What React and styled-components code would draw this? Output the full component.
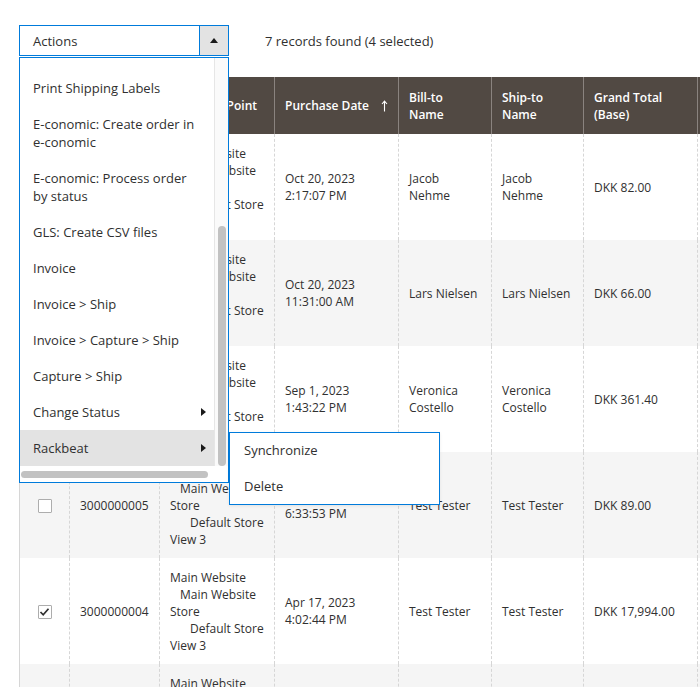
import React from 'react';
import styled, { createGlobalStyle } from 'styled-components';

const GlobalStyle = createGlobalStyle`
  html, body { margin: 0; padding: 0; background: #fff; }
  body {
    font-family: "Open Sans", "Liberation Sans", Arial, sans-serif;
    color: #303030;
    font-size: 13px;
  }
  * { box-sizing: border-box; }
`;

const Page = styled.div`
  width: 700px;
  height: 687px;
  overflow: hidden;
  padding: 25px 0 0 19px;
`;

const Toolbar = styled.div`
  display: flex;
  align-items: center;
  gap: 36px;
  height: 31px;
`;

const ActionsWrap = styled.div`
  position: relative;
  width: 210px;
  z-index: 10;
`;

const Select = styled.div`
  display: flex;
  height: 31px;
  border: 1px solid #007bdb;
  background: #fff;
`;

const SelectLabel = styled.div`
  flex: 1;
  display: flex;
  align-items: center;
  padding-left: 13px;
  font-size: 13px;
  color: #303030;
`;

const SelectToggle = styled.div`
  width: 29px;
  display: flex;
  align-items: center;
  justify-content: center;
  background: #e3e3e3;
  border-left: 1px solid #007bdb;
`;

const TriUp = styled.span`
  width: 0;
  height: 0;
  border-left: 4px solid transparent;
  border-right: 4px solid transparent;
  border-bottom: 5px solid #1a1a1a;
`;

const TriRight = styled.span`
  width: 0;
  height: 0;
  border-top: 4px solid transparent;
  border-bottom: 4px solid transparent;
  border-left: 5px solid #1a1a1a;
  flex-shrink: 0;
`;

const Records = styled.div`
  font-size: 13px;
  color: #303030;
`;

const Menu = styled.div`
  position: absolute;
  top: calc(100% + 1px);
  left: 0;
  width: 210px;
  border: 1px solid #007bdb;
  background: #fff;
  display: grid;
  grid-template-columns: 194px 14px;
  grid-template-rows: auto 16px;
`;

const MenuList = styled.div`
  padding-top: 12px;
`;

const MenuItem = styled.div`
  position: relative;
  display: flex;
  align-items: center;
  justify-content: space-between;
  padding: 9px 8px 9px 13px;
  line-height: 18px;
  font-size: 13px;
  color: #303030;
  white-space: nowrap;
  background: ${(p) => (p.$active ? '#e3e3e3' : 'transparent')};
`;

const VTrack = styled.div`
  display: flex;
  flex-direction: column;
  justify-content: flex-end;
  align-items: center;
  background: #fafafa;
  border-left: 1px solid #e6e6e6;
`;

const VThumb = styled.div`
  width: 8px;
  height: 240px;
  border-radius: 4px;
  background: #c2c2c2;
`;

const HTrack = styled.div`
  padding: 5px 6px 0 1px;
`;

const HThumb = styled.div`
  height: 7px;
  border-radius: 4px;
  background: #c2c2c2;
`;

const SubMenu = styled.div`
  position: absolute;
  top: 2px;
  left: calc(100% + 15px);
  width: 211px;
  border: 1px solid #007bdb;
  background: #fff;
  box-shadow: 0 1px 3px rgba(0, 0, 0, 0.08);
`;

const SubItem = styled.div`
  padding: 9px 14px;
  line-height: 17.5px;
  font-size: 13px;
  color: #303030;
`;

const Table = styled.table`
  margin-top: 21px;
  border-collapse: separate;
  border-spacing: 0;
  table-layout: fixed;
  width: 818px;
`;

const Th = styled.th`
  background: #514943;
  color: #fff;
  font-weight: 600;
  font-size: 12px;
  line-height: 17px;
  text-align: left;
  vertical-align: middle;
  padding: 11.5px 10px;
  border-left: 1px solid ${(p) => (p.$first ? '#514943' : '#8a837f')};
  white-space: nowrap;
`;

const ThInner = styled.div`
  display: flex;
  align-items: center;
  justify-content: space-between;
`;

const Tr = styled.tr`
  background: ${(p) => (p.$alt ? '#f5f5f5' : '#fff')};
`;

const Td = styled.td`
  padding: 10.5px 10px;
  font-size: 12px;
  line-height: 17px;
  color: #303030;
  vertical-align: middle;
  white-space: nowrap;
  text-align: ${(p) => (p.$center ? 'center' : 'left')};
  border-left: 1px ${(p) => (p.$first ? 'solid #d6d6d6' : 'dashed #d6d6d6')};
  overflow: hidden;
`;

const Line = styled.div`
  padding-left: ${(p) => p.$indent || 0}px;
`;

const Box = styled.span`
  display: inline-flex;
  align-items: center;
  justify-content: center;
  width: 14px;
  height: 14px;
  border: 1px solid #adadad;
  border-radius: 1px;
  background: #fff;
  vertical-align: middle;
`;

const Checkbox = ({ checked }) => (
  <Box>
    {checked && (
      <svg width="11" height="10" viewBox="0 0 11 10">
        <polyline points="1.5,5 4.2,7.8 9.5,1.8" fill="none" stroke="#303030" strokeWidth="1.7" />
      </svg>
    )}
  </Box>
);

const SortArrow = () => (
  <svg width="7" height="12" viewBox="0 0 7 12">
    <path d="M3.5 1.5 V11.5 M1 4 L3.5 1.2 L6 4" fill="none" stroke="#fff" strokeWidth="1.1" />
  </svg>
);

const menuItems = [
  { lines: ['Print Shipping Labels'] },
  { lines: ['E-conomic: Create order in', 'e-conomic'] },
  { lines: ['E-conomic: Process order', 'by status'] },
  { lines: ['GLS: Create CSV files'] },
  { lines: ['Invoice'] },
  { lines: ['Invoice > Ship'] },
  { lines: ['Invoice > Capture > Ship'] },
  { lines: ['Capture > Ship'] },
  { lines: ['Change Status'], sub: true },
  { lines: ['Rackbeat'], sub: true, active: true },
];

const point = [
  { t: 'Main Website', i: 0 },
  { t: 'Main Website', i: 10 },
  { t: 'Store', i: 0 },
  { t: 'Default Store', i: 20 },
  { t: 'View 3', i: 0 },
];

const rows = [
  { checked: true, id: '3000000008', date: ['Oct 20, 2023', '2:17:07 PM'], bill: ['Jacob', 'Nehme'], ship: ['Jacob', 'Nehme'], total: 'DKK 82.00' },
  { checked: true, id: '3000000007', date: ['Oct 20, 2023', '11:31:00 AM'], bill: ['Lars Nielsen'], ship: ['Lars Nielsen'], total: 'DKK 66.00' },
  { checked: true, id: '3000000006', date: ['Sep 1, 2023', '1:43:22 PM'], bill: ['Veronica', 'Costello'], ship: ['Veronica', 'Costello'], total: 'DKK 361.40' },
  { checked: false, id: '3000000005', date: ['May 12, 2023', '6:33:53 PM'], bill: ['Test Tester'], ship: ['Test Tester'], total: 'DKK 89.00' },
  { checked: true, id: '3000000004', date: ['Apr 17, 2023', '4:02:44 PM'], bill: ['Test Tester'], ship: ['Test Tester'], total: 'DKK 17,994.00' },
  { checked: false, id: '3000000003', date: ['Apr 2, 2023', '10:12:05 AM'], bill: ['Test Tester'], ship: ['Test Tester'], total: 'DKK 450.00' },
];

const Lines = ({ lines }) => lines.map((l, i) => <Line key={i}>{l}</Line>);

export default function App() {
  return (
    <>
      <GlobalStyle />
      <Page>
        <Toolbar>
          <ActionsWrap>
            <Select>
              <SelectLabel>Actions</SelectLabel>
              <SelectToggle>
                <TriUp />
              </SelectToggle>
            </Select>
            <Menu>
              <MenuList>
                {menuItems.map((m, i) => (
                  <MenuItem key={i} $active={m.active}>
                    <div>
                      {m.lines.map((l, j) => (
                        <div key={j}>{l}</div>
                      ))}
                    </div>
                    {m.sub && <TriRight />}
                    {m.active && (
                      <SubMenu>
                        <SubItem>Synchronize</SubItem>
                        <SubItem>Delete</SubItem>
                      </SubMenu>
                    )}
                  </MenuItem>
                ))}
              </MenuList>
              <VTrack>
                <VThumb />
              </VTrack>
              <HTrack>
                <HThumb />
              </HTrack>
            </Menu>
          </ActionsWrap>
          <Records>7 records found (4 selected)</Records>
        </Toolbar>

        <Table>
          <colgroup>
            <col style={{ width: 50 }} />
            <col style={{ width: 90 }} />
            <col style={{ width: 115 }} />
            <col style={{ width: 124 }} />
            <col style={{ width: 93 }} />
            <col style={{ width: 92 }} />
            <col style={{ width: 114 }} />
            <col style={{ width: 140 }} />
          </colgroup>
          <thead>
            <tr>
              <Th $first>
                <Checkbox />
              </Th>
              <Th>ID</Th>
              <Th>Purchase Point</Th>
              <Th>
                <ThInner>
                  <span>Purchase Date</span>
                  <SortArrow />
                </ThInner>
              </Th>
              <Th>
                Bill-to
                <br />
                Name
              </Th>
              <Th>
                Ship-to
                <br />
                Name
              </Th>
              <Th>
                Grand Total
                <br />
                (Base)
              </Th>
              <Th>
                Grand Total
                <br />
                (Purchased)
              </Th>
            </tr>
          </thead>
          <tbody>
            {rows.map((r, i) => (
              <Tr key={r.id} $alt={i % 2 === 1}>
                <Td $first $center>
                  <Checkbox checked={r.checked} />
                </Td>
                <Td>{r.id}</Td>
                <Td>
                  {point.map((p, j) => (
                    <Line key={j} $indent={p.i}>
                      {p.t}
                    </Line>
                  ))}
                </Td>
                <Td>
                  <Lines lines={r.date} />
                </Td>
                <Td>
                  <Lines lines={r.bill} />
                </Td>
                <Td>
                  <Lines lines={r.ship} />
                </Td>
                <Td>{r.total}</Td>
                <Td>{r.total}</Td>
              </Tr>
            ))}
          </tbody>
        </Table>
      </Page>
    </>
  );
}
